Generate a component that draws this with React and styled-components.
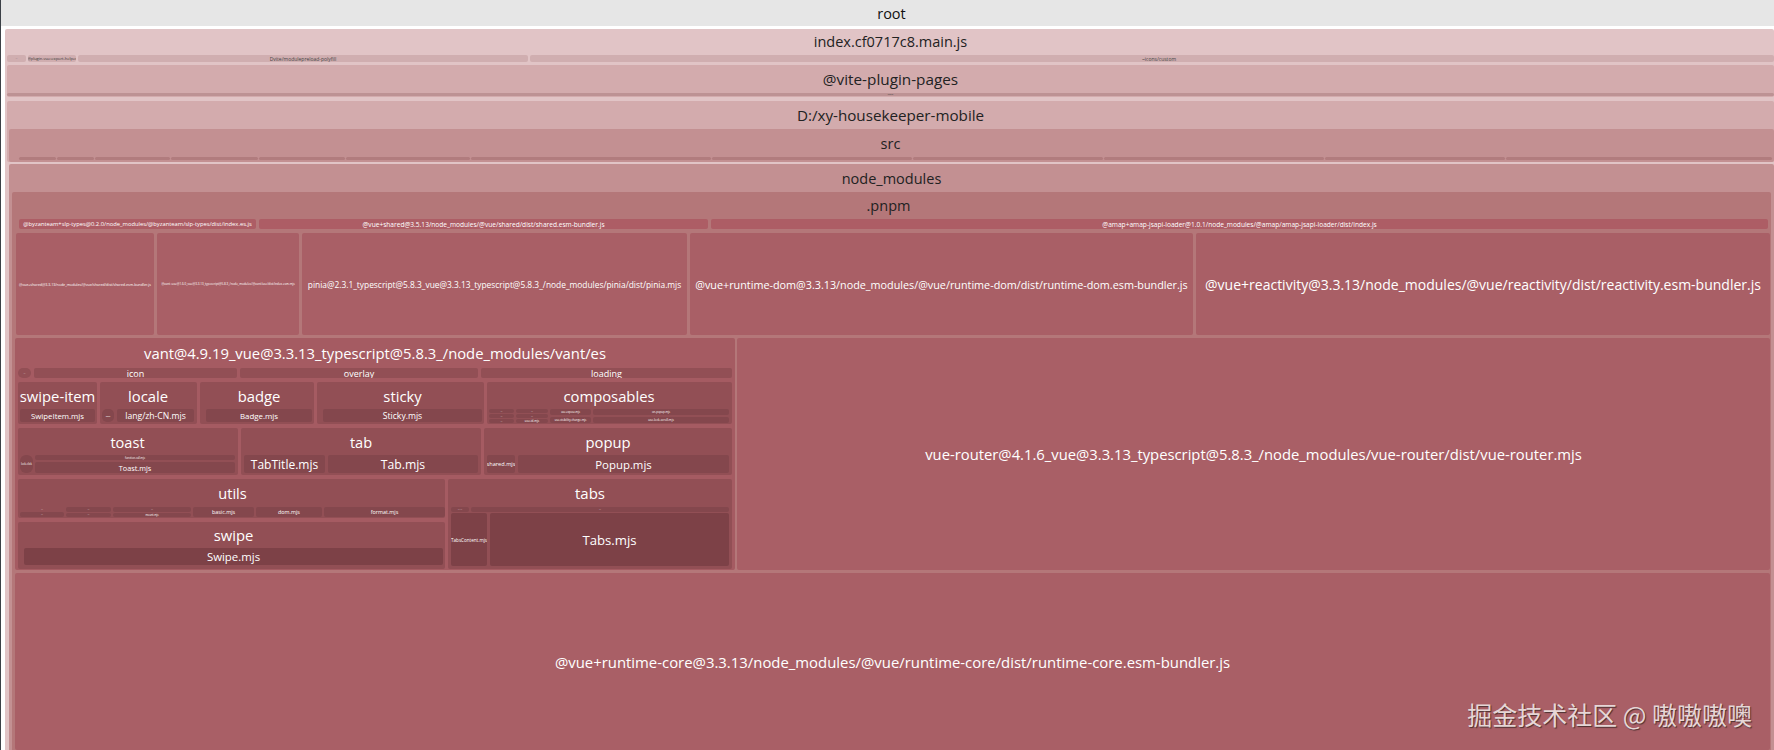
import React from 'react';
import styled, { createGlobalStyle } from 'styled-components';

const Global = createGlobalStyle`
  html, body { margin: 0; padding: 0; height: 750px; overflow: hidden; background: #fff; }
  body { font-family: "Open Sans", "Noto Sans", "Liberation Sans", "Noto Sans CJK SC", sans-serif; }
`;

const Page = styled.div`
  position: relative;
  display: flex;
  flex-direction: column;
  width: 1774px;
  height: 750px;
  overflow: hidden;
  box-sizing: border-box;
  border-left: 1px solid #3b4046;
  background: #fff;
`;

// a directory of the treemap: title on top, children below, its own fill shows in the gaps
const Node = styled.div`
  display: flex;
  flex-direction: column;
  box-sizing: border-box;
  flex: ${p => (p.$w ? `0 0 ${p.$w}px` : p.$h ? '0 0 auto' : '1 1 0')};
  min-width: 0;
  height: ${p => (p.$h ? `${p.$h}px` : 'auto')};
  margin: ${p => p.$m || '0'};
  padding: ${p => p.$pad || '0'};
  background: ${p => p.$fill};
  border-radius: 2px;
`;

const Title = styled.div`
  flex: 0 0 ${p => p.$h}px;
  display: flex;
  align-items: center;
  justify-content: center;
  box-sizing: border-box;
  padding: ${p => p.$pad || '0'};
  font-size: ${p => p.$size}px;
  color: ${p => p.$ink || '#fff'};
  background: ${p => p.$fill || 'transparent'};
  white-space: nowrap;
`;

const Row = styled.div`
  display: flex;
  flex: 0 0 ${p => p.$h}px;
  height: ${p => p.$h}px;
  gap: ${p => p.$gap ?? 3}px;
  margin-top: ${p => p.$top || 0}px;
  padding: ${p => p.$pad || '0'};
  box-sizing: border-box;
`;

const Stack = styled.div`
  display: flex;
  flex-direction: column;
  flex: ${p => (p.$w ? `0 0 ${p.$w}px` : '1 1 0')};
  min-width: 0;
  gap: ${p => p.$gap ?? 1}px;
`;

// a single file of the treemap
const Leaf = styled.div`
  display: flex;
  align-items: center;
  justify-content: center;
  flex: ${p => (p.$w ? `0 0 ${p.$w}px` : '1 1 0')};
  min-width: 0;
  overflow: hidden;
  box-sizing: border-box;
  padding: ${p => p.$pad || '0'};
  background: ${p => p.$fill};
  border-radius: ${p => p.$round || 2}px;
  font-size: ${p => p.$size || 5}px;
  color: ${p => p.$ink || '#fff'};
  white-space: nowrap;
`;

const Watermark = styled.div`
  position: absolute;
  right: 22px;
  top: 698px;
  font-family: "Noto Sans CJK SC", sans-serif;
  font-size: 25px;
  line-height: 32px;
  color: #e6d6d6;
  text-shadow: 1px 1px 1px #4a3030;
  white-space: nowrap;
`;

const C = {
  index: '#e1c4c6',
  indexKid: '#d0aeb0',
  app: '#d3abad',
  appKid: '#bd9294',
  src: '#c39092',
  srcKid: '#b17c7e',
  pnpm: '#b47779',
  file: '#ad5d65',
  big: '#a95f66',
  vant: '#a55b62',
  mid: '#924f55',
  midKid: '#84474d',
  deep: '#7d4147',
};

const srcParts = [37, 37, 75, 87, 86, 124, 240, 200, 190, 220, 180];

const App = () => (
  <Page>
    <Global />
    <Title $h={26} $size={14.5} $ink="#111" $fill="#e6e6e6" $pad="0 0 0 8px">root</Title>
    <Node $fill={C.index} $m="3px 0 0 4px" $h={730} $pad="0 0 0 2px">
      <Title $h={26} $size={14.5} $ink="#222" $pad="0 0 2px 0">index.cf0717c8.main.js</Title>
      <Row $h={7} $gap={2}>
        <Leaf $w={19} $fill={C.indexKid} $size={2} $ink="#555">—</Leaf>
        <Leaf $w={48} $fill={C.indexKid} $size={4} $ink="#333">@plugin-vue:export-helper</Leaf>
        <Leaf $w={450} $fill={C.indexKid} $size={5} $ink="#444">Dvite/modulepreload-polyfill</Leaf>
        <Leaf $fill={C.indexKid} $size={5} $ink="#444" $pad="0 0 0 14px">~icons/custom</Leaf>
      </Row>
      <Node $fill={C.app} $m="3px 0 0 0" $h={32}>
        <Title $h={28} $size={15.3} $ink="#222">@vite-plugin-pages</Title>
        <Row $h={3} $gap={0}>
          <Leaf $fill={C.appKid} $size={2} $ink="#444">pages</Leaf>
        </Row>
      </Node>
      <Node $fill={C.app} $m="4px 0 0 0" $h={61}>
        <Title $h={28} $size={15.2} $ink="#222">D:/xy-housekeeper-mobile</Title>
        <Node $fill={C.src} $m="0 0 0 2px" $h={33} $pad="0 2px 0 0">
          <Title $h={28} $size={14.5} $ink="#222">src</Title>
          <Row $h={3} $gap={1} $pad="0 0 0 10px">
            {srcParts.map((w, i) => <Leaf key={i} $w={w} $fill={C.srcKid} />)}
            <Leaf $fill={C.srcKid} />
          </Row>
        </Node>
      </Node>
      <Node $fill={C.src} $m="2px 0 0 2px" $h={600}>
        <Title $h={28} $size={14.5} $ink="#222">node_modules</Title>
        <Node $fill={C.pnpm} $m="0 3px 0 3px" $h={572} $pad="0 1px 0 3px">
          <Title $h={27} $size={14.5} $ink="#222" $pad="0 8px 0 0">.pnpm</Title>
          <Row $h={10} $pad="0 2px 0 4px">
            <Leaf $w={237} $fill={C.file} $size={5.8}>@byzanteam+slp-types@0.2.0/node_modules/@byzanteam/slp-types/dist/index.es.js</Leaf>
            <Leaf $w={449} $fill={C.file} $size={6.6}>@vue+shared@3.5.13/node_modules/@vue/shared/dist/shared.esm-bundler.js</Leaf>
            <Leaf $fill={C.file} $size={6.6}>@amap+amap-jsapi-loader@1.0.1/node_modules/@amap/amap-jsapi-loader/dist/index.js</Leaf>
          </Row>
          <Row $h={102} $top={4} $gap={3} $pad="0 0 0 1px">
            <Leaf $w={138} $fill={C.big} $size={3.6}>@vue+shared@3.3.13/node_modules/@vue/shared/dist/shared.esm-bundler.js</Leaf>
            <Leaf $w={142} $fill={C.big} $size={3}>@vant+use@1.6.0_vue@3.3.13_typescript@5.8.3_/node_modules/@vant/use/dist/index.esm.mjs</Leaf>
            <Leaf $w={385} $fill={C.big} $size={8.4}>pinia@2.3.1_typescript@5.8.3_vue@3.3.13_typescript@5.8.3_/node_modules/pinia/dist/pinia.mjs</Leaf>
            <Leaf $w={503} $fill={C.big} $size={10.8}>@vue+runtime-dom@3.3.13/node_modules/@vue/runtime-dom/dist/runtime-dom.esm-bundler.js</Leaf>
            <Leaf $fill={C.big} $size={14}>@vue+reactivity@3.3.13/node_modules/@vue/reactivity/dist/reactivity.esm-bundler.js</Leaf>
          </Row>
          <Row $h={232} $top={3} $gap={2}>
            <Node $w={720} $fill={C.vant} $pad="0 3px 0 3px">
              <Title $h={30} $size={14.8}>vant@4.9.19_vue@3.3.13_typescript@5.8.3_/node_modules/vant/es</Title>
              <Row $h={10}>
                <Leaf $w={13} $fill={C.mid} $round={5} $size={2}>—</Leaf>
                <Leaf $w={203} $fill={C.mid} $size={9}>icon</Leaf>
                <Leaf $w={238} $fill={C.mid} $size={9}>overlay</Leaf>
                <Leaf $fill={C.mid} $size={9}>loading</Leaf>
              </Row>
              <Row $h={42} $top={4}>
                <Node $w={79} $fill={C.mid} $pad="0 2px">
                  <Title $h={27} $size={14.8}>swipe-item</Title>
                  <Row $h={13}><Leaf $fill={C.midKid} $size={7.8}>SwipeItem.mjs</Leaf></Row>
                </Node>
                <Node $w={97} $fill={C.mid} $pad="0 3px 0 2px">
                  <Title $h={27} $size={14.8}>locale</Title>
                  <Row $h={13}>
                    <Leaf $w={12} $fill={C.midKid} $round={5} $size={2.4}>lang</Leaf>
                    <Leaf $fill={C.midKid} $size={8.6}>lang/zh-CN.mjs</Leaf>
                  </Row>
                </Node>
                <Node $w={114} $fill={C.mid} $pad="0 2px 0 6px">
                  <Title $h={27} $size={14.8}>badge</Title>
                  <Row $h={13}><Leaf $fill={C.midKid} $size={7.9}>Badge.mjs</Leaf></Row>
                </Node>
                <Node $w={167} $fill={C.mid} $pad="0 2px 0 6px">
                  <Title $h={27} $size={14.8}>sticky</Title>
                  <Row $h={13}><Leaf $fill={C.midKid} $size={8.6}>Sticky.mjs</Leaf></Row>
                </Node>
                <Node $fill={C.mid} $pad="0 3px 0 2px">
                  <Title $h={27} $size={14.8}>composables</Title>
                  <Row $h={14} $gap={2}>
                    <Stack $w={25} $gap={1}>
                      <Leaf $fill={C.midKid} $size={2}>—</Leaf>
                      <Leaf $fill={C.midKid} $size={2}>—</Leaf>
                      <Leaf $fill={C.midKid} $size={2}>—</Leaf>
                    </Stack>
                    <Stack $w={32} $gap={1}>
                      <Leaf $fill={C.midKid} $size={2}>—</Leaf>
                      <Leaf $fill={C.midKid} $size={2}>—</Leaf>
                      <Leaf $fill={C.midKid} $size={3}>use-id.mjs</Leaf>
                    </Stack>
                    <Stack $w={41} $gap={2}>
                      <Leaf $fill={C.midKid} $size={2.6}>use-expose.mjs</Leaf>
                      <Leaf $fill={C.midKid} $size={2.8}>use-visibility-change.mjs</Leaf>
                    </Stack>
                    <Stack $gap={2}>
                      <Leaf $fill={C.midKid} $size={2.8}>on-popup.mjs</Leaf>
                      <Leaf $fill={C.midKid} $size={3}>use-lock-scroll.mjs</Leaf>
                    </Stack>
                  </Row>
                </Node>
              </Row>
              <Row $h={47} $top={4}>
                <Node $w={220} $fill={C.mid} $pad="0 3px 0 2px">
                  <Title $h={27} $size={14.6}>toast</Title>
                  <Row $h={18} $gap={2}>
                    <Leaf $w={13} $fill={C.midKid} $round={6} $size={2.6}>lock-click</Leaf>
                    <Stack $gap={2}>
                      <Leaf $w={5} $fill={C.midKid} $size={2.6}>function-call.mjs</Leaf>
                      <Leaf $fill={C.midKid} $size={7.3}>Toast.mjs</Leaf>
                    </Stack>
                  </Row>
                </Node>
                <Node $w={240} $fill={C.mid} $pad="0 3px">
                  <Title $h={27} $size={14.6}>tab</Title>
                  <Row $h={18}>
                    <Leaf $w={81} $fill={C.midKid} $size={12}>TabTitle.mjs</Leaf>
                    <Leaf $fill={C.midKid} $size={12.2}>Tab.mjs</Leaf>
                  </Row>
                </Node>
                <Node $fill={C.mid} $pad="0 3px">
                  <Title $h={27} $size={14.8}>popup</Title>
                  <Row $h={18}>
                    <Leaf $w={28} $fill={C.midKid} $size={5.6}>shared.mjs</Leaf>
                    <Leaf $fill={C.midKid} $size={11.4}>Popup.mjs</Leaf>
                  </Row>
                </Node>
              </Row>
              <Row $h={90} $top={4}>
                <Stack $w={427} $gap={4}>
                  <Node $h={39} $fill={C.mid} $pad="0 0 1px 2px">
                    <Title $h={28} $size={14.6}>utils</Title>
                    <Row $h={10} $gap={2}>
                      <Stack $w={44} $gap={0}>
                        <Leaf $fill="transparent" $size={2}>—</Leaf>
                        <Leaf $fill={C.midKid} $size={2}>—</Leaf>
                      </Stack>
                      <Stack $w={45} $gap={1}>
                        <Leaf $fill={C.midKid} $size={2}>—</Leaf>
                        <Leaf $fill={C.midKid} $size={2}>—</Leaf>
                      </Stack>
                      <Stack $w={78} $gap={1}>
                        <Leaf $fill={C.midKid} $size={2}>—</Leaf>
                        <Leaf $fill={C.midKid} $size={2.6}>mount.mjs</Leaf>
                      </Stack>
                      <Leaf $w={61} $fill={C.midKid} $size={5.4}>basic.mjs</Leaf>
                      <Leaf $w={66} $fill={C.midKid} $size={5.4}>dom.mjs</Leaf>
                      <Leaf $fill={C.midKid} $size={5.4}>format.mjs</Leaf>
                    </Row>
                  </Node>
                  <Node $h={47} $fill={C.mid} $pad="0 2px 3px 6px">
                    <Title $h={26} $size={14.8}>swipe</Title>
                    <Row $h={17}><Leaf $fill={C.deep} $size={11.4}>Swipe.mjs</Leaf></Row>
                  </Node>
                </Stack>
                <Node $fill={C.mid} $pad="0 3px 3px 3px">
                  <Title $h={28} $size={15}>tabs</Title>
                  <Row $h={5} $gap={2}>
                    <Leaf $w={18} $fill={C.midKid} $size={2}>— —</Leaf>
                    <Leaf $fill={C.midKid} $size={2}>—</Leaf>
                  </Row>
                  <Row $h={53} $top={1}>
                    <Leaf $w={36} $fill={C.deep} $size={4.6}>TabsContent.mjs</Leaf>
                    <Leaf $fill={C.deep} $size={13.2}>Tabs.mjs</Leaf>
                  </Row>
                </Node>
              </Row>
            </Node>
            <Leaf $fill={C.big} $size={14.8}>vue-router@4.1.6_vue@3.3.13_typescript@5.8.3_/node_modules/vue-router/dist/vue-router.mjs</Leaf>
          </Row>
          <Row $h={177} $top={3} $gap={0}>
            <Leaf $fill={C.big} $size={14.9}>@vue+runtime-core@3.3.13/node_modules/@vue/runtime-core/dist/runtime-core.esm-bundler.js</Leaf>
          </Row>
        </Node>
      </Node>
    </Node>
    <Watermark>掘金技术社区 @ 嗷嗷嗷噢</Watermark>
  </Page>
);

export default App;
